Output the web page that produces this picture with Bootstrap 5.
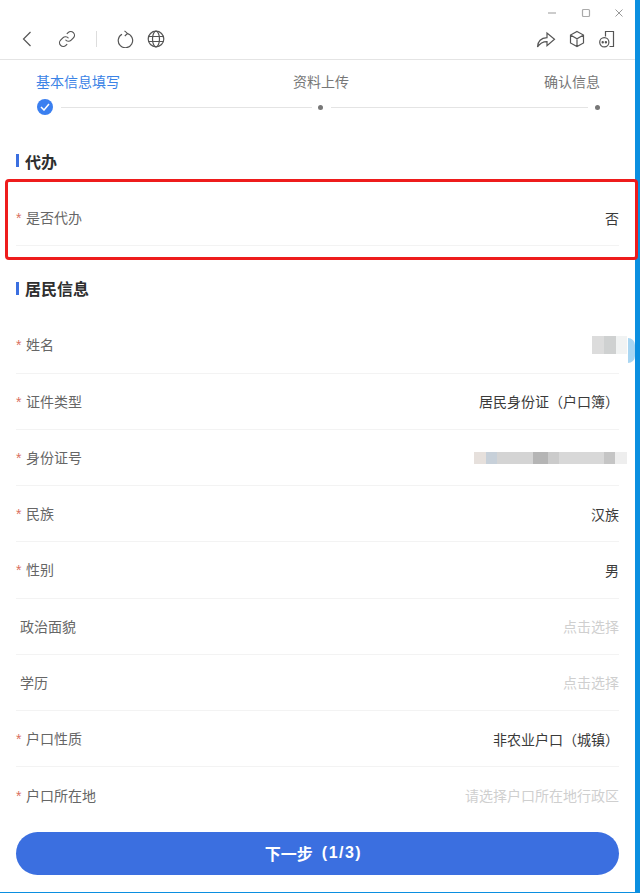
<!DOCTYPE html>
<html lang="zh-CN">
<head>
<meta charset="utf-8">
<title>代办</title>
<link href="https://cdn.jsdelivr.net/npm/bootstrap@5.3.0/dist/css/bootstrap.min.css" rel="stylesheet">
<style>
html,body{height:893px;overflow:hidden;background:#fff}
body{font-family:"Noto Sans CJK SC","Liberation Sans",sans-serif;font-size:14px;color:#333}
.shell{width:640px;height:893px;position:relative;background:#0b8fe0;padding:0 5px 1px 0}
.pane{height:892px;background:#fff;overflow:hidden}
.winbar{height:26px;padding:7px 10px 0 0;gap:21.5px}
.winbar svg{display:block}
.tools{height:34px;border-bottom:1px solid #e4e4e4;padding:0 20px 7px 21px}
.tools svg{display:block;stroke:#555;fill:none;stroke-width:1.2}
.tools svg.linkico{margin-left:25px;stroke-width:1.6}
.sep{width:1px;height:16px;background:#ddd;margin:0 20px 0 20px}
.globe{margin-left:13px}
.cube{margin-left:13px}
.phone{margin-left:14px}
.steps{height:75px;padding:12px 16px 0 36px}
.steplab{color:#777;font-size:14px;line-height:18px}
.steplab.on{color:#3b83e6}
.steplab.mid{margin-left:173px}
.steplab.end{margin-left:195px}
.track{padding:9px 0 0 1px}
.tick{width:16px;height:16px;border-radius:50%;background:#3a7ff0;flex:none;margin-right:8px}
.line{height:1px;background:#e4e4e4;flex:none}
.line.a{width:251px}
.line.b{width:257px}
.node{width:5px;height:5px;border-radius:50%;background:#777;flex:none}
.node.a{margin:0 8px 0 6px}
.node.b{margin-left:7px}
.sect{height:48px;padding:0 0 11px 16px;font-size:16px;font-weight:700;color:#2f2f2f;line-height:20px;margin-top:7px}
.sect::before{content:"";width:3px;height:13px;background:#3b6fe0;margin-right:6px}
.sect.two{margin-top:0;height:71px;padding:13px 0 0 16px}
.frow{height:56.25px;margin:0 16px;padding-top:1px;border-bottom:1px solid #f3f3f3;flex:none}
.flab{color:#666;white-space:nowrap}
.flab i{color:#d9705f;font-style:normal;display:inline-block;width:10px;font-family:"Liberation Sans",sans-serif}
.flab.plain{padding-left:4px}
.fval{color:#3a3a3a}
.fval.hint{color:#cfcfcf}
.blur1{width:35px;height:18px;background:linear-gradient(90deg,#dcdcdc 0 12px,#cfd1d1 12px 24px,#f1f3f3 24px 35px);margin-right:-8px}
.blur2{width:153px;height:12px;margin-right:-8px;background:linear-gradient(90deg,#e6e0dc 0 12px,#c7d0d9 12px 23px,#d4d4d4 23px 59px,#b5b5b5 59px 74px,#cbcbcb 74px 85px,#d8d8d8 85px 130px,#c5c5c5 130px 141px,#eeeeee 141px 153px)}
.nextbtn{display:flex;align-items:center;justify-content:center;flex:none;width:603px;height:43px;margin:8px 0 0 16px;border:0;border-radius:22px;background:#3b6fe0;color:#fff;font-size:16px;font-weight:700}
.nextbtn span{margin:0 8px 0 9px;letter-spacing:1.5px;font-family:"Liberation Sans",sans-serif}
.redmark{position:absolute;left:5px;top:179px;width:633px;height:81px;border:3px solid #ee1c1c;border-radius:4px;pointer-events:none}
.arcmark{position:absolute;left:628px;top:338px;width:7px;height:25px;background:#a9d6f2;border-radius:0 13px 13px 0/0 13px 13px 0}
</style>
</head>
<body>
<div class="shell">
<div class="pane d-flex flex-column">
  <div class="winbar d-flex justify-content-end align-items-start">
    <svg width="12" height="12" viewBox="0 0 12 12"><path d="M2 6h8" stroke="#aaa" stroke-width="1.2"/></svg>
    <svg width="12" height="12" viewBox="0 0 12 12"><rect x="2.500" y="2.500" width="7" height="7" rx="1" fill="none" stroke="#aaa" stroke-width="1.2"/></svg>
    <svg width="12" height="12" viewBox="0 0 12 12"><path d="M2.500 2.500l7 7M9.500 2.500l-7 7" stroke="#999" stroke-width="1"/></svg>
  </div>
  <div class="tools d-flex align-items-center">
    <svg width="12" height="18" viewBox="0 0 12 18"><path d="M9.500 2L2.500 9l7 7"/></svg>
    <svg class="linkico" width="18" height="18" viewBox="0 0 24 24"><path d="M10 13a5 5 0 0 0 7.540.54l3-3a5 5 0 0 0-7.070-7.070l-1.720 1.710"/><path d="M14 11a5 5 0 0 0-7.540-.54l-3 3a5 5 0 0 0 7.070 7.070l1.710-1.710"/></svg>
    <span class="sep"></span>
    <svg width="17" height="18" viewBox="0 0 17 18"><path d="M5 4.200a7.200 7.200 0 1 0 5-.7"/><path d="M7.500 .8L10.500 3.400 7.800 6" stroke-width="1.100"/></svg>
    <svg class="globe" width="18" height="18" viewBox="0 0 18 18"><circle cx="9" cy="9" r="7.800"/><ellipse cx="9" cy="9" rx="3.500" ry="7.800"/><path d="M1.600 6.500h14.800M1.600 11.500h14.800"/></svg>
    <svg class="ms-auto" width="20" height="18" viewBox="0 0 20 18"><path d="M1.500 17c.3-5.500 3.600-9 9.500-9.300V3l7.500 6.300-7.500 6.500v-4.200C7 11.600 3.800 13.300 1.500 17z"/></svg>
    <svg class="cube" width="16" height="18" viewBox="0 0 16 18"><path d="M8 1.500l6.500 3.500v8L8 16.500 1.500 13V5zM1.500 5L8 8.800 14.500 5M8 8.800v7.700"/></svg>
    <svg class="phone" width="16" height="18" viewBox="0 0 16 18"><path d="M6.500 6.500V1.500h8v15H10.500"/><circle cx="5.300" cy="12.300" r="4.600"/><circle cx="3.700" cy="12.300" r=".6" fill="#555"/><circle cx="6.900" cy="12.300" r=".6" fill="#555"/></svg>
  </div>
  <div class="steps">
    <div class="d-flex">
      <span class="steplab on">基本信息填写</span>
      <span class="steplab mid">资料上传</span>
      <span class="steplab end">确认信息</span>
    </div>
    <div class="track d-flex align-items-center">
      <span class="tick d-flex align-items-center justify-content-center">
        <svg width="10" height="8" viewBox="0 0 10 8"><path d="M1 4l3 3 5-6" fill="none" stroke="#fff" stroke-width="1.500"/></svg>
      </span>
      <span class="line a"></span>
      <span class="node a"></span>
      <span class="line b"></span>
      <span class="node b"></span>
    </div>
  </div>
  <div class="sect d-flex align-items-center">代办</div>
  <div class="frow d-flex justify-content-between align-items-center"><span class="flab"><i>*</i>是否代办</span><span class="fval">否</span></div>
  <div class="sect two d-flex align-items-center">居民信息</div>
  <div class="frow d-flex justify-content-between align-items-center"><span class="flab"><i>*</i>姓名</span><span class="blur1"></span></div>
  <div class="frow d-flex justify-content-between align-items-center"><span class="flab"><i>*</i>证件类型</span><span class="fval">居民身份证（户口簿）</span></div>
  <div class="frow d-flex justify-content-between align-items-center"><span class="flab"><i>*</i>身份证号</span><span class="blur2"></span></div>
  <div class="frow d-flex justify-content-between align-items-center"><span class="flab"><i>*</i>民族</span><span class="fval">汉族</span></div>
  <div class="frow d-flex justify-content-between align-items-center"><span class="flab"><i>*</i>性别</span><span class="fval">男</span></div>
  <div class="frow d-flex justify-content-between align-items-center"><span class="flab plain">政治面貌</span><span class="fval hint">点击选择</span></div>
  <div class="frow d-flex justify-content-between align-items-center"><span class="flab plain">学历</span><span class="fval hint">点击选择</span></div>
  <div class="frow d-flex justify-content-between align-items-center"><span class="flab"><i>*</i>户口性质</span><span class="fval">非农业户口（城镇）</span></div>
  <div class="frow d-flex justify-content-between align-items-center border-0"><span class="flab"><i>*</i>户口所在地</span><span class="fval hint">请选择户口所在地行政区</span></div>
  <button type="button" class="nextbtn btn">下一步<span>(1/3)</span></button>
</div>
<div class="redmark"></div>
<div class="arcmark"></div>
</div>
<script src="https://cdn.jsdelivr.net/npm/bootstrap@5.3.0/dist/js/bootstrap.bundle.min.js"></script>
</body>
</html>
